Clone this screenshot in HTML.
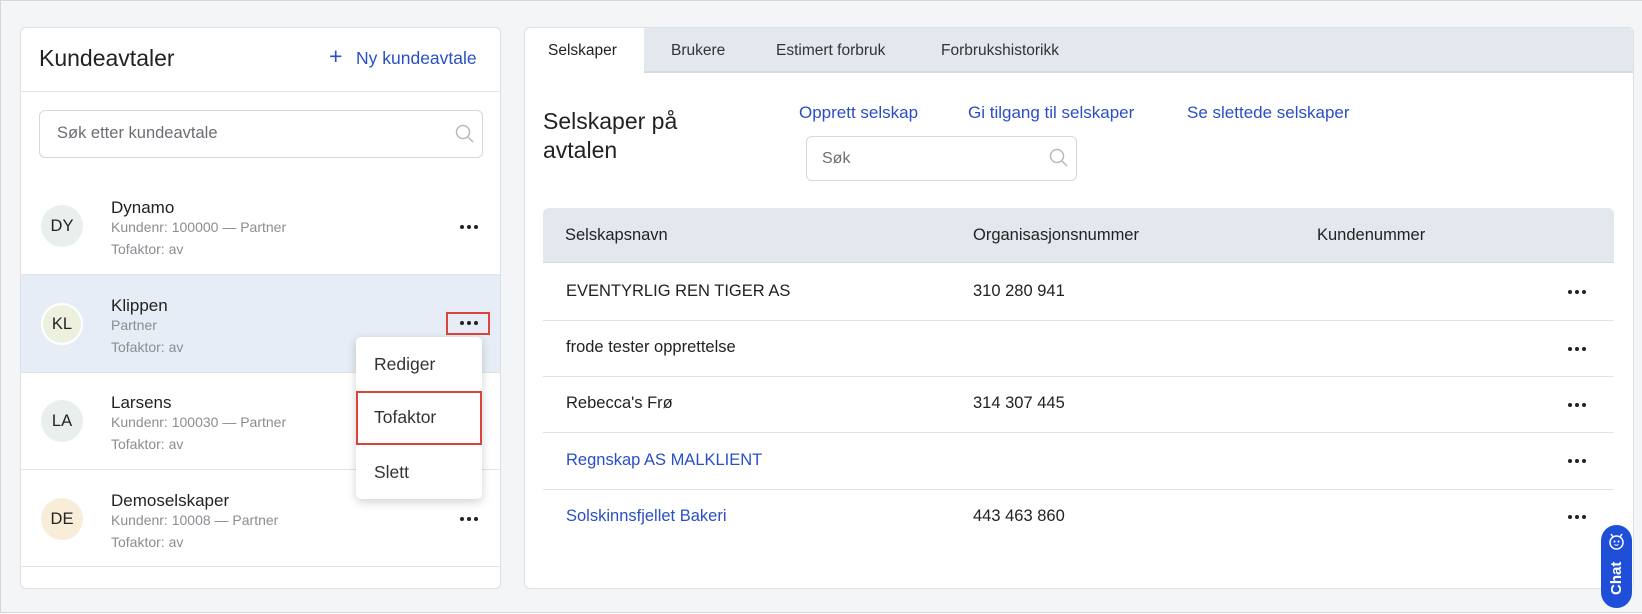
<!DOCTYPE html>
<html><head><meta charset="utf-8"><style>
*{box-sizing:border-box;margin:0;padding:0}
body{width:1642px;height:614px;background:#fff;font-family:"Liberation Sans",sans-serif;color:#222;position:relative;overflow:hidden}
.a{position:absolute}
.frame{left:0;top:0;width:1642px;height:613px;background:#f4f5f7;border:1px solid #d3d6da;border-right:none}
.card{background:#fff;border:1px solid #dde0e4;border-radius:6px}
.t{white-space:nowrap}
.dots{width:20px;height:4px}
.dots i{position:absolute;top:0;width:4px;height:4px;border-radius:50%;background:#222}
.av{width:42px;height:42px;border-radius:50%;font-size:16.5px;text-align:center;line-height:42px;color:#222}
.nm{font-size:17px;color:#222}
.sb{font-size:14px;color:#8a8d92}
.hl{height:1px;background:#e1e3e6}
.link{color:#2a4fc4}
</style></head><body>
<div class="a frame"></div>

<!-- left card -->
<div class="a card" style="left:20px;top:27px;width:481px;height:562px"></div>
<div class="a t" style="left:39px;top:45px;font-size:23px;color:#222">Kundeavtaler</div>
<div class="a t link" style="left:329px;top:43px;font-size:23px;font-weight:300">+</div>
<div class="a t link" style="left:356px;top:48px;font-size:17.5px">Ny kundeavtale</div>
<div class="a hl" style="left:21px;top:91px;width:479px"></div>
<div class="a" style="left:39px;top:110px;width:444px;height:48px;border:1px solid #d5d8dc;border-radius:6px"></div>
<div class="a t" style="left:57px;top:124px;font-size:16.5px;color:#6b6e73">Søk etter kundeavtale</div>
<svg class="a" style="left:455px;top:124px" width="20" height="20" viewBox="0 0 20 20"><circle cx="8" cy="8" r="6.5" fill="none" stroke="#b5b8bd" stroke-width="1.5"/><path d="M13 13l5 5" stroke="#b5b8bd" stroke-width="1.5"/></svg>

<!-- rows -->
<div class="a av" style="left:41px;top:205px;background:#e8efec">DY</div>
<div class="a t nm" style="left:111px;top:198px">Dynamo</div>
<div class="a t sb" style="left:111px;top:219px">Kundenr: 100000 — Partner</div>
<div class="a t sb" style="left:111px;top:241px">Tofaktor: av</div>
<div class="a dots" style="left:460px;top:225px"><i style="left:0"></i><i style="left:7px"></i><i style="left:14px"></i></div>
<div class="a hl" style="left:21px;top:274px;width:479px"></div>

<div class="a" style="left:21px;top:275px;width:479px;height:97px;background:#e6edf6"></div>
<div class="a av" style="left:41px;top:303px;background:#eef0df;border:2px solid #fff;line-height:38px">KL</div>
<div class="a t nm" style="left:111px;top:296px">Klippen</div>
<div class="a t sb" style="left:111px;top:317px">Partner</div>
<div class="a t sb" style="left:111px;top:339px">Tofaktor: av</div>
<div class="a" style="left:446px;top:312px;width:44px;height:23px;border:2px solid #d9453b"></div>
<div class="a dots" style="left:460px;top:321px"><i style="left:0"></i><i style="left:7px"></i><i style="left:14px"></i></div>
<div class="a hl" style="left:21px;top:372px;width:479px"></div>

<div class="a av" style="left:41px;top:400px;background:#e8efec">LA</div>
<div class="a t nm" style="left:111px;top:393px">Larsens</div>
<div class="a t sb" style="left:111px;top:414px">Kundenr: 100030 — Partner</div>
<div class="a t sb" style="left:111px;top:436px">Tofaktor: av</div>
<div class="a hl" style="left:21px;top:469px;width:479px"></div>

<div class="a av" style="left:41px;top:498px;background:#f8edd8">DE</div>
<div class="a t nm" style="left:111px;top:491px">Demoselskaper</div>
<div class="a t sb" style="left:111px;top:512px">Kundenr: 10008 — Partner</div>
<div class="a t sb" style="left:111px;top:534px">Tofaktor: av</div>
<div class="a dots" style="left:460px;top:517px"><i style="left:0"></i><i style="left:7px"></i><i style="left:14px"></i></div>
<div class="a hl" style="left:21px;top:566px;width:479px"></div>

<!-- dropdown -->
<div class="a" style="left:356px;top:337px;width:126px;height:162px;background:#fff;border-radius:5px;box-shadow:0 3px 10px rgba(0,0,0,.18)"></div>
<div class="a t" style="left:374px;top:354px;font-size:17.5px;color:#333">Rediger</div>
<div class="a" style="left:356px;top:391px;width:126px;height:54px;border:2px solid #d9453b"></div>
<div class="a t" style="left:374px;top:407px;font-size:17.5px;color:#333">Tofaktor</div>
<div class="a t" style="left:374px;top:462px;font-size:17.5px;color:#333">Slett</div>

<!-- right card -->
<div class="a card" style="left:524px;top:27px;width:1110px;height:562px"></div>
<div class="a" style="left:525px;top:28px;width:1108px;height:45px;background:#e3e8ef;border-bottom:2px solid #d6dbe2;border-radius:6px 6px 0 0"></div>
<div class="a" style="left:525px;top:28px;width:119px;height:47px;background:#fff;border-radius:6px 0 0 0"></div>
<div class="a t" style="left:548px;top:42px;font-size:15.5px;color:#222">Selskaper</div>
<div class="a t" style="left:671px;top:42px;font-size:15.5px;color:#333">Brukere</div>
<div class="a t" style="left:776px;top:42px;font-size:15.5px;color:#333">Estimert forbruk</div>
<div class="a t" style="left:941px;top:42px;font-size:15.5px;color:#333">Forbrukshistorikk</div>

<div class="a t" style="left:543px;top:107px;font-size:23px;line-height:29px;color:#222">Selskaper på<br>avtalen</div>
<div class="a t link" style="left:799px;top:103px;font-size:17px">Opprett selskap</div>
<div class="a t link" style="left:968px;top:103px;font-size:17px">Gi tilgang til selskaper</div>
<div class="a t link" style="left:1187px;top:103px;font-size:17px">Se slettede selskaper</div>
<div class="a" style="left:806px;top:136px;width:271px;height:45px;border:1px solid #d5d8dc;border-radius:6px"></div>
<div class="a t" style="left:822px;top:150px;font-size:16px;color:#6b6e73">Søk</div>
<svg class="a" style="left:1049px;top:148px" width="20" height="20" viewBox="0 0 20 20"><circle cx="8" cy="8" r="6.5" fill="none" stroke="#b5b8bd" stroke-width="1.5"/><path d="M13 13l5 5" stroke="#b5b8bd" stroke-width="1.5"/></svg>

<div class="a" style="left:543px;top:208px;width:1071px;height:55px;background:#e3e8ef;border-radius:6px 6px 0 0;border-bottom:1px solid #d6dbe2"></div>
<div class="a t" style="left:565px;top:226px;font-size:16.5px;color:#222">Selskapsnavn</div>
<div class="a t" style="left:973px;top:226px;font-size:16.5px;color:#222">Organisasjonsnummer</div>
<div class="a t" style="left:1317px;top:226px;font-size:16.5px;color:#222">Kundenummer</div>

<div class="a t" style="left:566px;top:282px;font-size:16.5px">EVENTYRLIG REN TIGER AS</div>
<div class="a t" style="left:973px;top:282px;font-size:16.5px">310 280 941</div>
<div class="a dots" style="left:1568px;top:290px"><i style="left:0"></i><i style="left:7px"></i><i style="left:14px"></i></div>
<div class="a hl" style="left:543px;top:320px;width:1071px"></div>
<div class="a t" style="left:566px;top:338px;font-size:16.5px">frode tester opprettelse</div>
<div class="a dots" style="left:1568px;top:347px"><i style="left:0"></i><i style="left:7px"></i><i style="left:14px"></i></div>
<div class="a hl" style="left:543px;top:376px;width:1071px"></div>
<div class="a t" style="left:566px;top:394px;font-size:16.5px">Rebecca's Frø</div>
<div class="a t" style="left:973px;top:394px;font-size:16.5px">314 307 445</div>
<div class="a dots" style="left:1568px;top:403px"><i style="left:0"></i><i style="left:7px"></i><i style="left:14px"></i></div>
<div class="a hl" style="left:543px;top:432px;width:1071px"></div>
<div class="a t link" style="left:566px;top:451px;font-size:16.5px">Regnskap AS MALKLIENT</div>
<div class="a dots" style="left:1568px;top:459px"><i style="left:0"></i><i style="left:7px"></i><i style="left:14px"></i></div>
<div class="a hl" style="left:543px;top:489px;width:1071px"></div>
<div class="a t link" style="left:566px;top:507px;font-size:16.5px">Solskinnsfjellet Bakeri</div>
<div class="a t" style="left:973px;top:507px;font-size:16.5px">443 463 860</div>
<div class="a dots" style="left:1568px;top:515px"><i style="left:0"></i><i style="left:7px"></i><i style="left:14px"></i></div>

<!-- chat -->
<div class="a" style="left:1601px;top:525px;width:31px;height:83px;background:#1f4fd8;border-radius:16px"></div>
<div class="a t" style="left:1607px;top:556px;width:20px;height:45px;writing-mode:vertical-rl;transform:rotate(180deg);color:#fff;font-size:15px;font-weight:bold;line-height:20px;text-align:center">Chat</div>
<svg class="a" style="left:1607px;top:532px" width="19" height="19" viewBox="0 0 19 19"><circle cx="9.5" cy="10.5" r="6.5" fill="none" stroke="#fff" stroke-width="1.5"/><path d="M4 2l2 3M15 2l-2 3" stroke="#fff" stroke-width="1.5"/><circle cx="7.5" cy="9.5" r="1" fill="#fff"/><circle cx="11.5" cy="9.5" r="1" fill="#fff"/><path d="M7.5 12.5q2 1.5 4 0" stroke="#fff" fill="none"/></svg>
</body></html>
